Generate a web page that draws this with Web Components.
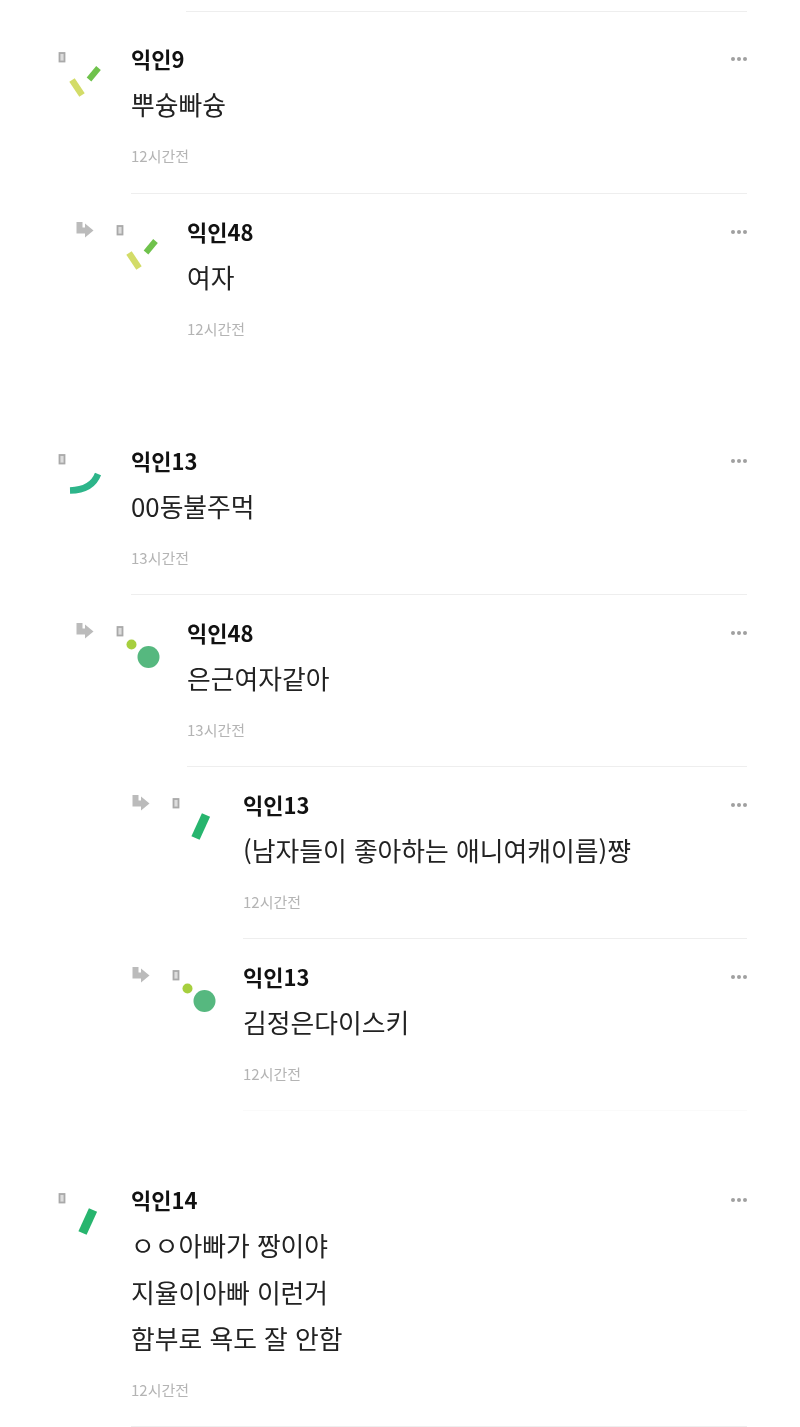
<!DOCTYPE html>
<html lang="ko">
<head>
<meta charset="utf-8">
<title>댓글</title>
<style>
  html, body { margin: 0; background: #fff; }
  body { font-family: "Noto Sans CJK KR", "Noto Sans", sans-serif; }
</style>
</head>
<body>
<comment-list>
  <comment-group>
    <comment-edge></comment-edge>
  </comment-group>
  <comment-group gap="9">
    <comment-row level="0" mark="ticks" name="익인9" time="12시간전" style="--tail:27.5px">뿌슝빠슝</comment-row>
    <comment-row level="1" mark="ticks" name="익인48" time="12시간전" plain>여자</comment-row>
  </comment-group>
  <comment-group gap="57">
    <comment-row level="0" mark="arc" name="익인13" time="13시간전">00동불주먹</comment-row>
    <comment-row level="1" mark="dots" name="익인48" time="13시간전">은근여자같아</comment-row>
    <comment-row level="2" mark="bar" name="익인13" time="12시간전">(남자들이 좋아하는 애니여캐이름)쨩</comment-row>
    <comment-row level="2" mark="dots" name="익인13" time="12시간전" faint>김정은다이스키</comment-row>
  </comment-group>
  <comment-group gap="51">
    <comment-row level="0" mark="bar" name="익인14" time="12시간전">ㅇㅇ아빠가 짱이야<br>지율이아빠 이런거<br>함부로 욕도 잘 안함</comment-row>
  </comment-group>
</comment-list>

<script>
class CommentList extends HTMLElement {
  constructor() {
    super();
    this.attachShadow({ mode: 'open' });
    this.shadowRoot.innerHTML = `
      <style>
        :host { display: block; width: 800px; height: 1427px; overflow: hidden; filter: blur(0.5px); }
      </style>
      <slot></slot>`;
  }
}

class CommentGroup extends HTMLElement {
  constructor() {
    super();
    this.attachShadow({ mode: 'open' });
    this.shadowRoot.innerHTML = `
      <style>
        :host { display: block; margin-top: var(--gap, 0); }
      </style>
      <slot></slot>`;
  }
  connectedCallback() {
    this.style.setProperty('--gap', (this.getAttribute('gap') || 0) + 'px');
  }
}

// tail of the reply that scrolled off the top
class CommentEdge extends HTMLElement {
  constructor() {
    super();
    this.attachShadow({ mode: 'open' });
    this.shadowRoot.innerHTML = `
      <style>
        :host { display: block; height: 12px; margin: 0 53px 0 186px; border-bottom: 1px solid #eee; box-sizing: border-box; }
      </style>`;
  }
}

const MARKS = {
  ticks: `
    <path d="M40.5 20 31 31.5" stroke="#6fc24c" stroke-width="6"/>
    <path d="M14 32 24 47" stroke="#d3dc68" stroke-width="6.5"/>`,
  arc: `<path d="M40 24Q34 40 12 40.5" fill="none" stroke="#2db58a" stroke-width="6.5"/>`,
  dots: `
    <circle cx="33.5" cy="35" r="11" fill="#56b87f"/>
    <circle cx="16.5" cy="22.5" r="5" fill="#a6cf3e"/>`,
  bar: `<path d="M35 21 24.5 44" stroke="#27b56e" stroke-width="9"/>`
};

class AnonMark extends HTMLElement {
  constructor() {
    super();
    this.attachShadow({ mode: 'open' });
  }
  connectedCallback() {
    const mark = MARKS[this.getAttribute('mark')] || '';
    const rectX = this.getAttribute('rect-x') || '1.5';
    this.shadowRoot.innerHTML = `
      <style>
        :host { display: block; width: 56px; height: 60px; }
        svg { display: block; }
      </style>
      <svg width="56" height="60" viewBox="0 0 56 60">
        <rect x="${rectX}" y="5" width="5" height="8.5" fill="#ddd" stroke="#a9a9a9" stroke-width="1.8"/>
        ${mark}
      </svg>`;
  }
}

class CommentRow extends HTMLElement {
  constructor() {
    super();
    this.attachShadow({ mode: 'open' });
  }
  connectedCallback() {
    const level = Number(this.getAttribute('level') || 0);
    const name = this.getAttribute('name');
    const time = this.getAttribute('time');
    const mark = this.getAttribute('mark');
    const start = level === 0 ? 58 : 19 + level * 56;
    const arrow = level === 0 ? '' : `
      <svg class="arrow" width="18" height="16" viewBox="0 0 18 16">
        <path d="M3.5 0V8.5H10" fill="none" stroke="#bbb" stroke-width="6"/>
        <path d="M9 1.5 17.5 8.5 9 15.5Z" fill="#bbb"/>
      </svg>`;
    let line = '1px solid #eee';
    if (this.hasAttribute('plain')) line = '1px solid transparent';
    if (this.hasAttribute('faint')) line = '1px solid #fafafa';

    this.shadowRoot.innerHTML = `
      <style>
        :host { display: flex; align-items: flex-start; padding: 0 53px 0 ${start}px; }
        .arrow { flex: none; width: 18px; margin: 28px 21px 0 1px; }
        anon-mark { flex: none; margin-top: 27px; margin-right: ${level === 0 ? 17 : 16}px; }
        .main {
          flex: 1;
          min-width: 0;
          box-sizing: border-box;
          padding: 26px 0 var(--tail, 26.5px);
          border-bottom: ${line};
        }
        .head { display: flex; justify-content: space-between; align-items: center; height: 24px; }
        .name { margin-top: -2px; font-size: 22px; font-weight: 700; line-height: 24px; color: #111; }
        .more { display: flex; gap: 1.5px; }
        .more i { display: block; width: 4.5px; height: 4.5px; border-radius: 50%; background: #a0a0a0; }
        .text { margin: 10px 0 18px; font-size: 25.8px; line-height: 46.5px; color: #222; }
        .time { font-size: 15px; line-height: 20px; color: #b4b4b4; }
      </style>
      ${arrow}
      <anon-mark mark="${mark}" rect-x="${level === 0 ? 1.5 : 2.5}"></anon-mark>
      <div class="main">
        <div class="head">
          <span class="name">${name}</span>
          <span class="more"><i></i><i></i><i></i></span>
        </div>
        <div class="text"><slot></slot></div>
        <div class="time">${time}</div>
      </div>`;
  }
}

customElements.define('comment-list', CommentList);
customElements.define('comment-group', CommentGroup);
customElements.define('comment-edge', CommentEdge);
customElements.define('anon-mark', AnonMark);
customElements.define('comment-row', CommentRow);
</script>
</body>
</html>
